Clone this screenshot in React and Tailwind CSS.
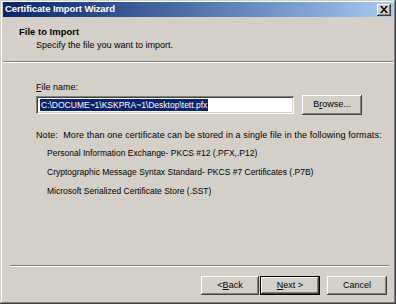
const font = { fontFamily: '"Liberation Sans", Arial, sans-serif' };

const raised =
  'bg-[#d4d0c8] shadow-[inset_-1px_-1px_#404040,inset_1px_1px_#ffffff,inset_-2px_-2px_#808080,inset_2px_2px_#d4d0c8]';

const Btn = ({ children, className = '', isDefault = false }) => (
  <div
    className={`${isDefault ? 'border border-black' : ''} ${className}`}
  >
    <div className={`${raised} h-full flex items-center justify-center text-[9px] text-black`}>
      {children}
    </div>
  </div>
);

const Rule = ({ className = '' }) => (
  <div className={`h-[2px] border-t border-[#808080] border-b border-b-white ${className}`} />
);

export default function App() {
  return (
    <div
      style={font}
      className="w-[396px] h-[304px] bg-[#d4d0c8] p-[3px] flex flex-col shadow-[inset_-1px_-1px_#404040,inset_1px_1px_#d4d0c8,inset_-2px_-2px_#808080,inset_2px_2px_#ffffff] overflow-hidden"
    >
      {/* Title bar */}
      <div className="h-[15px] shrink-0 flex items-center justify-between bg-gradient-to-r from-[#0a246a] to-[#a6caf0] pl-[2px] pr-[2px] -mt-[1px]">
        <span className="text-white font-bold text-[9.5px] tracking-[-0.1px]">Certificate Import Wizard</span>
        <div className={`${raised} w-[14px] h-[12px] flex items-center justify-center`}>
          <svg width="8" height="7" viewBox="0 0 8 7">
            <path d="M0 0h2l2 2.5L6 0h2L5 3.5 8 7H6L4 4.5 2 7H0l3-3.5z" fill="#000" />
          </svg>
        </div>
      </div>

      {/* Header */}
      <div className="h-[44px] shrink-0 flex flex-col pt-[9px] pl-[16px]">
        <span className="font-bold text-[9.5px] text-black leading-[12px]">File to Import</span>
        <span className="text-[9px] text-black leading-[12px] mt-[1px] pl-[17px]">
          Specify the file you want to import.
        </span>
      </div>

      <Rule className="shrink-0 mx-0" />

      {/* Body */}
      <div className="flex-1 flex flex-col pl-[33px] pr-[30px] pt-[19px]">
        <span className="text-[9px] text-black leading-[11px]">
          <u>F</u>ile name:
        </span>
        <div className="flex items-center gap-[8px] mt-[2px]">
          <div className="w-[258px] h-[18px] bg-white shadow-[inset_1px_1px_#808080,inset_-1px_-1px_#ffffff,inset_2px_2px_#404040,inset_-2px_-2px_#d4d0c8] flex items-center pl-[4px]">
            <span className="bg-[#0a246a] text-white text-[8.5px] leading-[12px] px-[1px]">
              C:\DOCUME~1\KSKPRA~1\Desktop\tett.pfx
            </span>
          </div>
          <Btn className="w-[60px] h-[20px]">
            B<u>r</u>owse...
          </Btn>
        </div>

        <span className="text-[9px] text-black leading-[12px] mt-[14px] whitespace-pre tracking-[0.1px]">
          {'Note:  More than one certificate can be stored in a single file in the following formats:'}
        </span>
        <div className="flex flex-col pl-[11px] mt-[6px] gap-[7px] text-[8.5px] text-black leading-[12px]">
          <span>Personal Information Exchange- PKCS #12 (.PFX,.P12)</span>
          <span>Cryptographic Message Syntax Standard- PKCS #7 Certificates (.P7B)</span>
          <span>Microsoft Serialized Certificate Store (.SST)</span>
        </div>
      </div>

      <Rule className="shrink-0 ml-[7px] mr-[4px]" />

      {/* Footer buttons */}
      <div className="h-[34px] shrink-0 flex items-start justify-end pr-[6px] pt-[9px]">
        <Btn className="w-[58px] h-[19px]">
          &lt; <u>B</u>ack
        </Btn>
        <Btn isDefault className="w-[60px] h-[19px] ml-[1px]">
          <u>N</u>ext &gt;
        </Btn>
        <Btn className="w-[60px] h-[19px] ml-[7px]">Cancel</Btn>
      </div>
    </div>
  );
}
